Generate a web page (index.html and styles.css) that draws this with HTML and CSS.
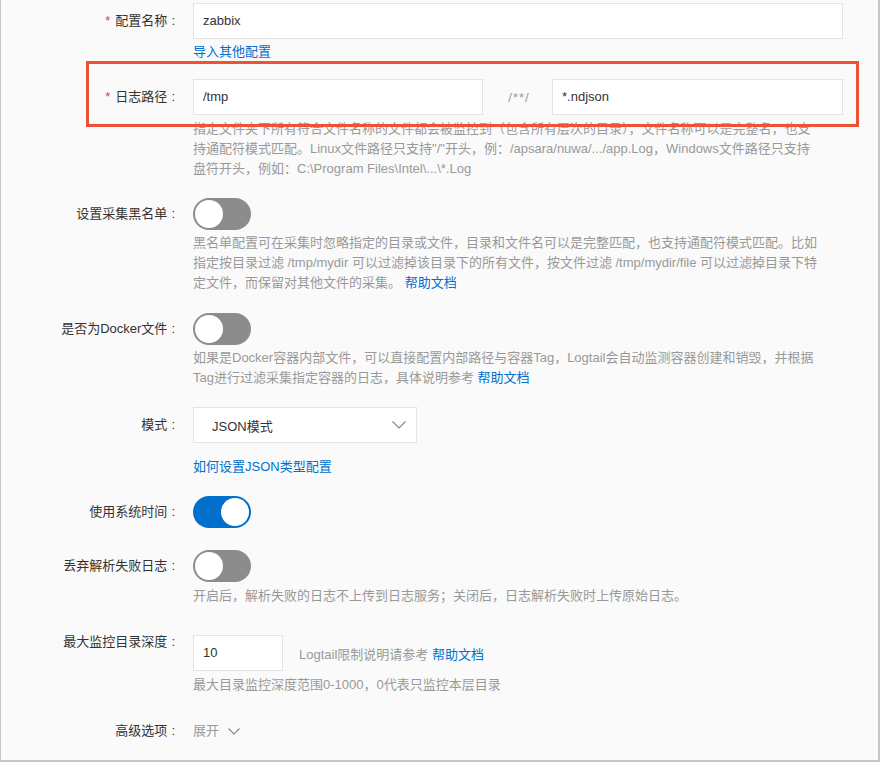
FILE: index.html
```html
<!DOCTYPE html>
<html lang="zh-CN">
<head>
<meta charset="utf-8">
<title>Logtail 配置</title>
<link rel="stylesheet" href="styles.css">
</head>
<body>
<div class="frame">
  <div class="form">
    <div class="row">
      <div class="label"><span class="req">*</span>配置名称<span class="colon">:</span></div>
      <div class="ctrl">
        <div class="input">zabbix</div>
        <a class="link help-link">导入其他配置</a>
      </div>
    </div>

    <div class="row row-path">
      <div class="label"><span class="req">*</span>日志路径<span class="colon">:</span></div>
      <div class="ctrl">
        <div class="path">
          <div class="input">/tmp</div>
          <div class="sep">/**/</div>
          <div class="input">*.ndjson</div>
        </div>
        <p class="desc desc-tight">指定文件夹下所有符合文件名称的文件都会被监控到（包含所有层次的目录），文件名称可以是完整名，也支<br>持通配符模式匹配。Linux文件路径只支持"/"开头，例：/apsara/nuwa/.../app.Log，Windows文件路径只支持<br>盘符开头，例如：C:\Program Files\Intel\...\*.Log</p>
      </div>
    </div>

    <div class="row row-toggle">
      <div class="label">设置采集黑名单<span class="colon">:</span></div>
      <div class="ctrl">
        <div class="switch"><span class="knob"></span></div>
        <p class="desc">黑名单配置可在采集时忽略指定的目录或文件，目录和文件名可以是完整匹配，也支持通配符模式匹配。比如<br>指定按目录过滤 /tmp/mydir 可以过滤掉该目录下的所有文件，按文件过滤 /tmp/mydir/file 可以过滤掉目录下特<br>定文件，而保留对其他文件的采集。 <a class="link">帮助文档</a></p>
      </div>
    </div>

    <div class="row row-toggle row-docker">
      <div class="label">是否为Docker文件<span class="colon">:</span></div>
      <div class="ctrl">
        <div class="switch"><span class="knob"></span></div>
        <p class="desc">如果是Docker容器内部文件，可以直接配置内部路径与容器Tag，Logtail会自动监测容器创建和销毁，并根据<br>Tag进行过滤采集指定容器的日志，具体说明参考 <a class="link">帮助文档</a></p>
      </div>
    </div>

    <div class="row">
      <div class="label">模式<span class="colon">:</span></div>
      <div class="ctrl">
        <div class="select">
          <span>JSON模式</span>
          <svg class="chev" width="14" height="8" viewBox="0 0 14 8"><path d="M0.5 0.5 L7 7 L13.5 0.5" fill="none" stroke="#8a8a8a" stroke-width="1.2"/></svg>
        </div>
        <a class="link mode-link">如何设置JSON类型配置</a>
      </div>
    </div>

    <div class="row row-toggle">
      <div class="label">使用系统时间<span class="colon">:</span></div>
      <div class="ctrl">
        <div class="switch on"><span class="knob"></span></div>
      </div>
    </div>

    <div class="row row-toggle row-discard">
      <div class="label">丢弃解析失败日志<span class="colon">:</span></div>
      <div class="ctrl">
        <div class="switch"><span class="knob"></span></div>
        <p class="desc desc-tight">开启后，解析失败的日志不上传到日志服务；关闭后，日志解析失败时上传原始日志。</p>
      </div>
    </div>

    <div class="row row-depth">
      <div class="label label-top">最大监控目录深度<span class="colon">:</span></div>
      <div class="ctrl">
        <div class="depth">
          <div class="input input-small">10</div>
          <span class="note">Logtail限制说明请参考 <a class="link">帮助文档</a></span>
        </div>
        <p class="desc desc-tight">最大目录监控深度范围0-1000，0代表只监控本层目录</p>
      </div>
    </div>

    <div class="row row-adv">
      <div class="label label-line">高级选项<span class="colon">:</span></div>
      <div class="ctrl">
        <span class="expand">展开
          <svg width="12" height="7" viewBox="0 0 12 7"><path d="M0.5 0.5 L6 6 L11.5 0.5" fill="none" stroke="#8a8a8a" stroke-width="1.2"/></svg>
        </span>
      </div>
    </div>
  </div>
</div>
</body>
</html>
```

FILE: styles.css
```css
* { box-sizing: border-box; }

html, body {
  margin: 0;
  padding: 0;
}

body {
  font-family: "Liberation Sans", "Noto Sans CJK SC", sans-serif;
  font-size: 13px;
  color: #333;
  background: #fafafa;
}

.frame {
  width: 880px;
  height: 762px;
  background: #fafafa;
  border-left: 1px solid #c6c6c6;
  border-right: 2px solid #c6c6c6;
  border-bottom: 2px solid #c6c6c6;
  padding: 3px 35px 0 0;
  overflow: hidden;
}

.form {
  display: flex;
  flex-direction: column;
  gap: 19px;
}

.row {
  display: grid;
  grid-template-columns: 176px 1fr;
  column-gap: 16px;
  align-items: start;
}

.label {
  height: 36px;
  display: flex;
  align-items: center;
  justify-content: flex-end;
  white-space: nowrap;
  line-height: 20px;
  color: #333;
}

.colon {
  padding: 0 2px 0 4px;
}

.row-toggle .label { height: 32px; }

.label-top {
  height: auto;
  margin-top: -3px;
}

.label-line { height: 20px; }

.req {
  color: #e8412c;
  margin-right: 5px;
}

.ctrl {
  display: flex;
  flex-direction: column;
  align-items: flex-start;
  min-width: 0;
}

.input {
  width: 100%;
  height: 36px;
  background: #fff;
  border: 1px solid #e3e3e3;
  padding: 0 9px;
  line-height: 34px;
  color: #333;
  white-space: nowrap;
}

.link {
  color: #0070cc;
  text-decoration: none;
  cursor: pointer;
}

.help-link {
  margin-top: 3px;
  line-height: 20px;
}

.row-path {
  position: relative;
  margin-top: -2px;
}

.row-path::before {
  content: "";
  position: absolute;
  left: 85px;
  right: -16px;
  top: -18px;
  height: 60px;
  border: 3px solid #ee5235;
  pointer-events: none;
}

.path {
  display: grid;
  grid-template-columns: 290px 69px 1fr;
  width: 100%;
}

.sep {
  display: flex;
  align-items: center;
  justify-content: center;
  color: #999;
  letter-spacing: 1px;
  padding-left: 3px;
}

.desc {
  margin: 3px 0 0;
  line-height: 20px;
  color: #999;
  white-space: nowrap;
}

.desc-tight { margin-top: 4px; }

.switch {
  position: relative;
  width: 58px;
  height: 32px;
  border-radius: 16px;
  background: #8c8c8c;
}

.switch .knob {
  position: absolute;
  top: 2px;
  left: 2px;
  width: 28px;
  height: 28px;
  border-radius: 50%;
  background: #fff;
}

.switch.on { background: #0070cc; }

.switch.on .knob {
  left: auto;
  right: 2px;
}

.row-docker { margin-top: 1px; }

.select {
  width: 224px;
  height: 36px;
  background: #fff;
  border: 1px solid #e3e3e3;
  display: flex;
  align-items: center;
  justify-content: space-between;
  padding: 0 10px 0 18px;
  color: #333;
}

.chev { display: block; }

.mode-link {
  margin-top: 14px;
  line-height: 20px;
}

.row-discard { margin-top: 3px; }

.row-depth { margin-top: 10px; }

.depth {
  display: flex;
  align-items: center;
  gap: 16px;
}

.input-small { width: 90px; }

.note {
  color: #999;
  white-space: nowrap;
}

.row-adv { margin-top: 7px; }

.expand {
  display: inline-flex;
  align-items: center;
  gap: 9px;
  line-height: 20px;
  color: #999;
}

.expand svg { display: block; }
```
